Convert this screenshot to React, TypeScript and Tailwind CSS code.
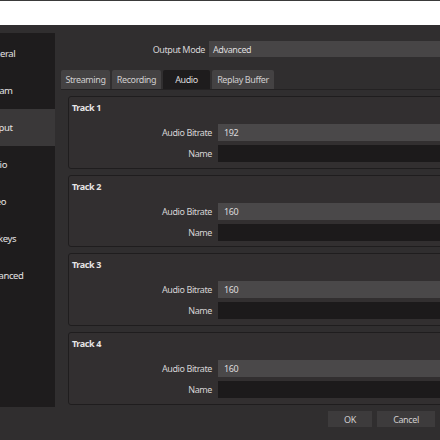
import { ReactNode } from "react"

const sidebarItems = ["General", "Stream", "Output", "Audio", "Video", "Hotkeys", "Advanced"]
const tabs = ["Streaming", "Recording", "Audio", "Replay Buffer"]
const tracks = [
  { name: "Track 1", bitrate: "192" },
  { name: "Track 2", bitrate: "160" },
  { name: "Track 3", bitrate: "160" },
  { name: "Track 4", bitrate: "160" },
]

function Row({ label, children }: { label: string; children: ReactNode }) {
  return (
    <div className="flex items-center">
      <span className="w-[149px] shrink-0 pr-[6px] text-right text-[#d6d4d5]">{label}</span>
      {children}
    </div>
  )
}

export default function App() {
  return (
    <div
      className="w-[440px] h-[440px] overflow-hidden flex flex-col bg-[#302e2f] text-[9px] tracking-[-0.4px] leading-none text-[#dedcdd]"
      style={{ fontFamily: '"Noto Sans", "Open Sans", sans-serif' }}
    >
      {/* window strip above */}
      <div className="h-[25px] shrink-0 bg-white border-t border-[#3a3a3a]" />

      <div className="flex flex-1 min-h-0">
        {/* SIDEBAR */}
        <div className="w-[55px] shrink-0 mt-[8px] mb-[33px] bg-[#1e1c1d] overflow-hidden pt-[2px]">
          {sidebarItems.map((item) => (
            <div
              key={item}
              className={
                "h-[37px] flex items-center text-[9.5px] " +
                (item === "Output" ? "bg-[#3a3839]" : "")
              }
            >
              <span className="-ml-[17px] whitespace-nowrap text-[#e4e2e3]">{item}</span>
            </div>
          ))}
        </div>

        {/* MAIN */}
        <div className="flex-1 min-w-0 flex flex-col pl-[6px]">
          <div className="flex items-center mt-[16px] h-[16px]">
            <span className="w-[148px] shrink-0 pr-[4px] text-right text-[#d6d4d5]">Output Mode</span>
            <div className="flex-1 h-[16px] bg-[#474546] flex items-center pl-[4px] whitespace-nowrap">
              Advanced
            </div>
          </div>

          <div className="flex gap-[2px] mt-[13px] h-[19px]">
            {tabs.map((t) => (
              <div
                key={t}
                className={
                  "h-[19px] flex items-center justify-center whitespace-nowrap rounded-t-[2px] " +
                  (t === "Audio" ? "w-[47px] bg-[#1e1c1d]" : "bg-[#444243] text-[#d0cecf] " +
                    (t === "Replay Buffer" ? "w-[62px]" : "w-[49px]"))
                }
              >
                {t}
              </div>
            ))}
          </div>

          {/* TAB PANE */}
          <div className="flex-1 border-t border-[#242223] flex flex-col gap-[6px] pl-[7px] pt-[6px]">
            {tracks.map((tr) => (
              <div
                key={tr.name}
                className="h-[72.7px] shrink-0 -mr-[20px] rounded-[3px] border border-[#1f1d1e] bg-[#322f30] pt-[6px]"
              >
                <div className="pl-[3px] h-[10px] font-bold text-[#e6e4e5]">{tr.name}</div>
                <div className="mt-[11px] flex flex-col gap-[4px]">
                  <Row label="Audio Bitrate">
                    <div className="flex-1 h-[17px] bg-[#4a4849] flex items-center pl-[6px]">{tr.bitrate}</div>
                  </Row>
                  <Row label="Name">
                    <div className="flex-1 h-[17px] bg-[#1c1a1b]" />
                  </Row>
                </div>
              </div>
            ))}
          </div>

          {/* BUTTONS */}
          <div className="h-[35px] shrink-0 flex items-start justify-end gap-[5px] pt-[6px] pr-[5px]">
            <div className="w-[44px] h-[16px] bg-[#3d3b3c] flex items-center justify-center text-[#d0cecf]">OK</div>
            <div className="w-[58px] h-[16px] bg-[#3d3b3c] flex items-center justify-center text-[#d0cecf]">Cancel</div>
          </div>
        </div>
      </div>
    </div>
  )
}
